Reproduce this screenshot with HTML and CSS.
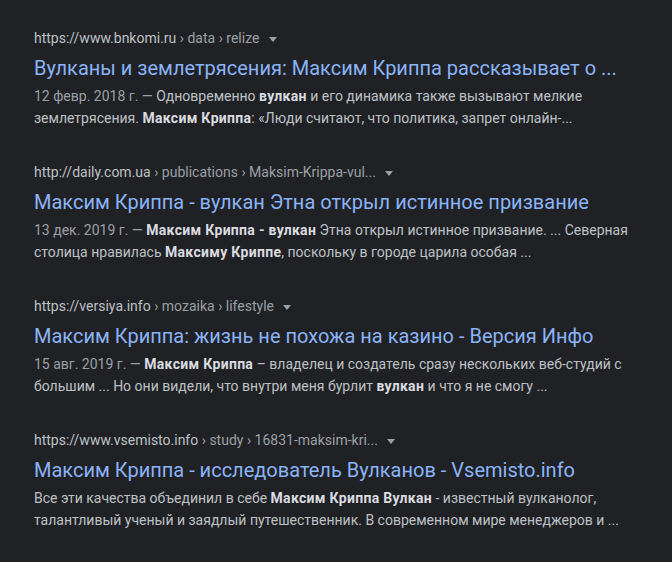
FILE: index.html
```html
<!DOCTYPE html>
<html lang="ru">
<head>
    <meta charset="utf-8">
    <title>Результаты поиска</title>
    <link rel="stylesheet" href="styles.css">
</head>
<body>
    <div class="results">
        <div class="result">
            <div class="cite"><span class="domain">https://www.bnkomi.ru</span> › data › relize <span class="arrow"></span></div>
            <a class="title">Вулканы и землетрясения: Максим Криппа рассказывает о ...</a>
            <div class="snippet"><span class="date">12 февр. 2018 г. — </span>Одновременно <b>вулкан</b> и его динамика также вызывают мелкие землетрясения. <b>Максим Криппа</b>: «Люди считают, что политика, запрет онлайн-...</div>
        </div>
        <div class="result">
            <div class="cite"><span class="domain">http://daily.com.ua</span> › publications › Maksim-Krippa-vul... <span class="arrow"></span></div>
            <a class="title">Максим Криппа - вулкан Этна открыл истинное призвание</a>
            <div class="snippet"><span class="date">13 дек. 2019 г. — </span><b>Максим Криппа - вулкан</b> Этна открыл истинное призвание. ... Северная столица нравилась <b>Максиму Криппе</b>, поскольку в городе царила особая ...</div>
        </div>
        <div class="result">
            <div class="cite"><span class="domain">https://versiya.info</span> › mozaika › lifestyle <span class="arrow"></span></div>
            <a class="title">Максим Криппа: жизнь не похожа на казино - Версия Инфо</a>
            <div class="snippet"><span class="date">15 авг. 2019 г. — </span><b>Максим Криппа</b> – владелец и создатель сразу нескольких веб-студий с большим ... Но они видели, что внутри меня бурлит <b>вулкан</b> и что я не смогу ...</div>
        </div>
        <div class="result">
            <div class="cite"><span class="domain">https://www.vsemisto.info</span> › study › 16831-maksim-kri... <span class="arrow"></span></div>
            <a class="title">Максим Криппа - исследователь Вулканов - Vsemisto.info</a>
            <div class="snippet">Все эти качества объединил в себе <b>Максим Криппа Вулкан</b> - известный вулканолог, талантливый ученый и заядлый путешественник. В современном мире менеджеров и ...</div>
        </div>
    </div>
</body>
</html>
```

FILE: styles.css
```css
body {
    margin: 0;
    background-color: #202124;
    font-family: Roboto, Arial, sans-serif;
}

.results {
    padding: 27px 20px 0 34px;
    max-width: 600px;
}

.result {
    margin-bottom: 32px;
}

.cite {
    font-size: 14px;
    line-height: 22px;
    color: #9aa0a6;
}

.cite .domain {
    color: #bdc1c6;
}

.arrow {
    display: inline-block;
    width: 0;
    height: 0;
    margin-left: 6px;
    vertical-align: middle;
    border-left: 4px solid transparent;
    border-right: 4px solid transparent;
    border-top: 5px solid #9aa0a6;
}

.title {
    display: block;
    margin-top: 6px;
    font-size: 20px;
    line-height: 26px;
    color: #8ab4f8;
    text-decoration: none;
}

.snippet {
    margin-top: 4px;
    font-size: 14px;
    line-height: 22px;
    color: #bdc1c6;
}

.snippet b {
    color: #dadce0;
    letter-spacing: 0.3px;
}

.date {
    color: #9aa0a6;
}
```
